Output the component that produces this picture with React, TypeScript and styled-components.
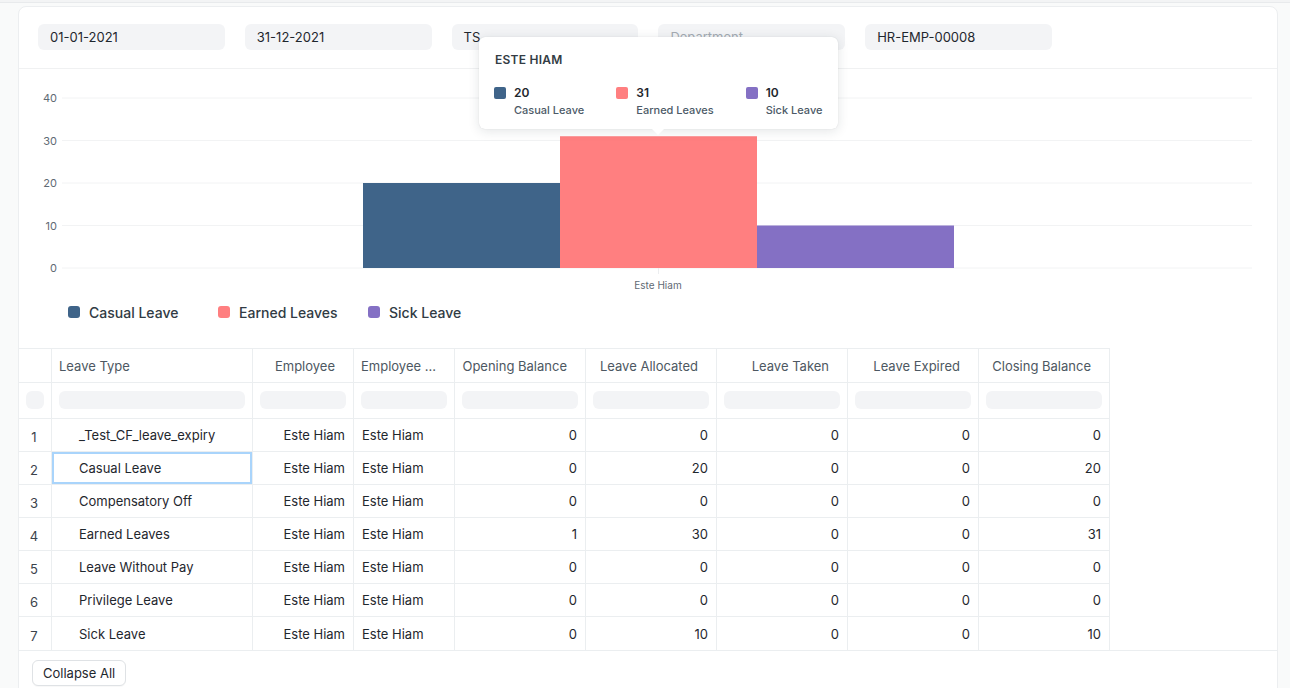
import React from "react";
import styled, { createGlobalStyle, css } from "styled-components";

const Global = createGlobalStyle`
  html, body { margin: 0; padding: 0; background: #f9fafa; overflow: hidden; }
  body { font-family: Inter, "Noto Sans", "Liberation Sans", sans-serif; color: #1f272e; -webkit-font-smoothing: antialiased; }
  * { box-sizing: border-box; }
`;

const Page = styled.div`
  width: 1290px;
  height: 688px;
  overflow: hidden;
  background: #f9fafa;
`;

const TopStrip = styled.div`
  height: 3px;
  background: #f3f4f5;
  border-bottom: 1px solid #e8eaec;
`;

const Body = styled.div`
  padding: 3px 12px 0 18px;
`;

const Card = styled.div`
  background: #fff;
  border: 1px solid #eceef0;
  border-radius: 8px;
  height: 700px;
`;

const FilterBar = styled.div`
  display: flex;
  gap: 20px;
  padding: 17px 19px 18px;
  border-bottom: 1px solid #f0f1f2;
`;

const FilterBox = styled.div<{ $placeholder?: boolean }>`
  width: 186.8px;
  height: 26px;
  border-radius: 6px;
  background: #f3f4f6;
  padding: 0 12px;
  display: flex;
  align-items: center;
  font-size: 13px;
  color: ${(p) => (p.$placeholder ? "#a4abb3" : "#1f272e")};
`;

const ChartSection = styled.div`
  position: relative;
`;

const ChartSvg = styled.svg`
  display: block;
`;

const Tooltip = styled.div`
  position: absolute;
  left: 460px;
  top: -32px;
  background: #fff;
  border-radius: 6px;
  padding: 15px 16px 12px 15px;
  box-shadow: 0 2px 12px rgba(25, 39, 52, 0.12), 0 0 1px rgba(25, 39, 52, 0.18);
  z-index: 2;
  &::after {
    content: "";
    position: absolute;
    left: 173px;
    bottom: -6px;
    width: 0;
    height: 0;
    border-left: 6px solid transparent;
    border-right: 6px solid transparent;
    border-top: 6px solid #fff;
  }
`;

const TooltipTitle = styled.div`
  font-size: 12px;
  font-weight: 600;
  letter-spacing: 0.02em;
  color: #333c44;
  text-transform: uppercase;
  margin-bottom: 20px;
  padding-left: 1px;
`;

const TooltipItems = styled.div`
  display: flex;
  gap: 32px;
`;

const TooltipItem = styled.div`
  display: flex;
  gap: 8px;
  align-items: flex-start;
`;

const Square = styled.span<{ $color: string; $size: number; $radius: number }>`
  display: inline-block;
  flex: none;
  width: ${(p) => p.$size}px;
  height: ${(p) => p.$size}px;
  border-radius: ${(p) => p.$radius}px;
  background: ${(p) => p.$color};
`;

const TooltipText = styled.div`
  display: flex;
  flex-direction: column;
  gap: 3px;
  margin-top: -2px;
`;

const TooltipValue = styled.span`
  font-size: 12px;
  font-weight: 600;
  color: #1f272e;
  line-height: 15px;
`;

const TooltipLabel = styled.span`
  font-size: 11px;
  font-weight: 500;
  color: #4c5a67;
  line-height: 14px;
`;

const Legend = styled.div`
  display: flex;
  height: 32px;
  align-items: center;
  padding-left: 49px;
`;

const LegendItem = styled.div`
  width: 150px;
  display: flex;
  align-items: center;
  gap: 9px;
  font-size: 14px;
  font-weight: 500;
  color: #313b44;
`;

const TableArea = styled.div`
  margin-top: 20px;
  border-bottom: 1px solid #ebeef0;
`;

const Table = styled.div`
  width: fit-content;
  border-top: 1px solid #ebeef0;
`;

const COLS = "33px 201px 101px 101px 131px 131px 131px 131px 131px";

const Row = styled.div<{ $h: number; $last?: boolean }>`
  display: grid;
  grid-template-columns: ${COLS};
  height: ${(p) => p.$h}px;
  & > * {
    border-bottom: ${(p) => (p.$last ? "none" : "1px solid #ebeef0")};
  }
`;

const Cell = styled.div<{ $align?: "left" | "right" | "center"; $head?: boolean; $indent?: boolean; $selected?: boolean; $num?: boolean }>`
  border-right: 1px solid #ebeef0;
  display: flex;
  align-items: center;
  justify-content: ${(p) => (p.$align === "right" ? "flex-end" : p.$align === "center" ? "center" : "flex-start")};
  padding: 0 8px;
  font-size: 13px;
  white-space: nowrap;
  overflow: hidden;
  color: ${(p) => (p.$head ? "#4d5862" : "#1f272e")};
  ${(p) => p.$head && p.$align === "right" && css`padding-right: 18px;`}
  ${(p) => p.$head && p.$align === "left" && css`padding-left: 7px;`}
  ${(p) => p.$indent && css`padding-left: 27px;`}
  ${(p) => p.$num && css`color: #3b434b; padding-top: 4px; padding-left: 6px;`}
  ${(p) => p.$selected && css`box-shadow: inset 0 0 0 2px #a9d4fb;`}
`;

const FilterCell = styled.div`
  border-right: 1px solid #ebeef0;
  padding: 8px 7px 0 7px;
`;

const FilterPill = styled.div`
  height: 18px;
  border-radius: 6px;
  background: #f3f4f6;
`;

const Footer = styled.div`
  padding: 9px 13px;
`;

const Button = styled.button`
  height: 26px;
  padding: 0 10px;
  border: 1px solid #dfe2e5;
  border-radius: 6px;
  background: #fff;
  font-family: inherit;
  font-size: 13px;
  color: #1f272e;
  box-shadow: 0 1px 1px rgba(0, 0, 0, 0.03);
`;

const BLUE = "#3f6489";
const RED = "#ff7f80";
const PURPLE = "#8470c4";

const headers: { label: string; align: "left" | "right" }[] = [
  { label: "Leave Type", align: "left" },
  { label: "Employee", align: "right" },
  { label: "Employee ...", align: "left" },
  { label: "Opening Balance", align: "right" },
  { label: "Leave Allocated", align: "right" },
  { label: "Leave Taken", align: "right" },
  { label: "Leave Expired", align: "right" },
  { label: "Closing Balance", align: "right" },
];

const rows: [string, number, number, number, number, number][] = [
  ["_Test_CF_leave_expiry", 0, 0, 0, 0, 0],
  ["Casual Leave", 0, 20, 0, 0, 20],
  ["Compensatory Off", 0, 0, 0, 0, 0],
  ["Earned Leaves", 1, 30, 0, 0, 31],
  ["Leave Without Pay", 0, 0, 0, 0, 0],
  ["Privilege Leave", 0, 0, 0, 0, 0],
  ["Sick Leave", 0, 10, 0, 0, 10],
];

function Chart() {
  const base = 199;
  const unit = 4.25;
  const ticks = [0, 10, 20, 30, 40];
  return (
    <ChartSvg width={1258} height={227}>
      {ticks.map((t) => {
        const y = base - t * unit;
        return (
          <g key={t}>
            <line x1={43} x2={1233} y1={y} y2={y} stroke="#f2f3f4" strokeWidth={1} />
            <text x={38} y={y + 4} textAnchor="end" fontSize={11} fill="#5f6a74" fontFamily="Inter, sans-serif">
              {t}
            </text>
          </g>
        );
      })}
      <rect x={344} y={base - 20 * unit} width={197} height={20 * unit} fill={BLUE} />
      <rect x={541} y={base - 31 * unit} width={197} height={31 * unit} fill={RED} />
      <rect x={738} y={base - 10 * unit} width={197} height={10 * unit} fill={PURPLE} />
      <line x1={639.5} x2={639.5} y1={base} y2={base + 6} stroke="#eceef0" />
      <text x={639} y={base + 21} textAnchor="middle" fontSize={10} fill="#5f6a74" fontFamily="Inter, sans-serif">
        Este Hiam
      </text>
    </ChartSvg>
  );
}

export default function App() {
  return (
    <Page>
      <Global />
      <TopStrip />
      <Body>
        <Card>
          <FilterBar>
            <FilterBox>01-01-2021</FilterBox>
            <FilterBox>31-12-2021</FilterBox>
            <FilterBox>TS</FilterBox>
            <FilterBox $placeholder>Department</FilterBox>
            <FilterBox>HR-EMP-00008</FilterBox>
          </FilterBar>
          <ChartSection>
            <Chart />
            <Tooltip>
              <TooltipTitle>Este Hiam</TooltipTitle>
              <TooltipItems>
                {[
                  [BLUE, "20", "Casual Leave"],
                  [RED, "31", "Earned Leaves"],
                  [PURPLE, "10", "Sick Leave"],
                ].map(([c, v, l]) => (
                  <TooltipItem key={l}>
                    <Square $color={c} $size={12} $radius={2} />
                    <TooltipText>
                      <TooltipValue>{v}</TooltipValue>
                      <TooltipLabel>{l}</TooltipLabel>
                    </TooltipText>
                  </TooltipItem>
                ))}
              </TooltipItems>
            </Tooltip>
            <Legend>
              <LegendItem>
                <Square $color={BLUE} $size={12} $radius={3} />
                Casual Leave
              </LegendItem>
              <LegendItem>
                <Square $color={RED} $size={12} $radius={3} />
                Earned Leaves
              </LegendItem>
              <LegendItem>
                <Square $color={PURPLE} $size={12} $radius={3} />
                Sick Leave
              </LegendItem>
            </Legend>
          </ChartSection>
          <TableArea>
            <Table>
              <Row $h={34}>
                <Cell $head />
                {headers.map((h) => (
                  <Cell key={h.label} $head $align={h.align}>
                    {h.label}
                  </Cell>
                ))}
              </Row>
              <Row $h={36}>
                {Array.from({ length: 9 }).map((_, i) => (
                  <FilterCell key={i}>
                    <FilterPill />
                  </FilterCell>
                ))}
              </Row>
              {rows.map((r, i) => (
                <Row key={r[0]} $h={33} $last={i === rows.length - 1}>
                  <Cell $num $align="center">{i + 1}</Cell>
                  <Cell $indent $selected={i === 1}>{r[0]}</Cell>
                  <Cell $align="right">Este Hiam</Cell>
                  <Cell>Este Hiam</Cell>
                  {r.slice(1).map((v, j) => (
                    <Cell key={j} $align="right">
                      {v}
                    </Cell>
                  ))}
                </Row>
              ))}
            </Table>
          </TableArea>
          <Footer>
            <Button>Collapse All</Button>
          </Footer>
        </Card>
      </Body>
    </Page>
  );
}
